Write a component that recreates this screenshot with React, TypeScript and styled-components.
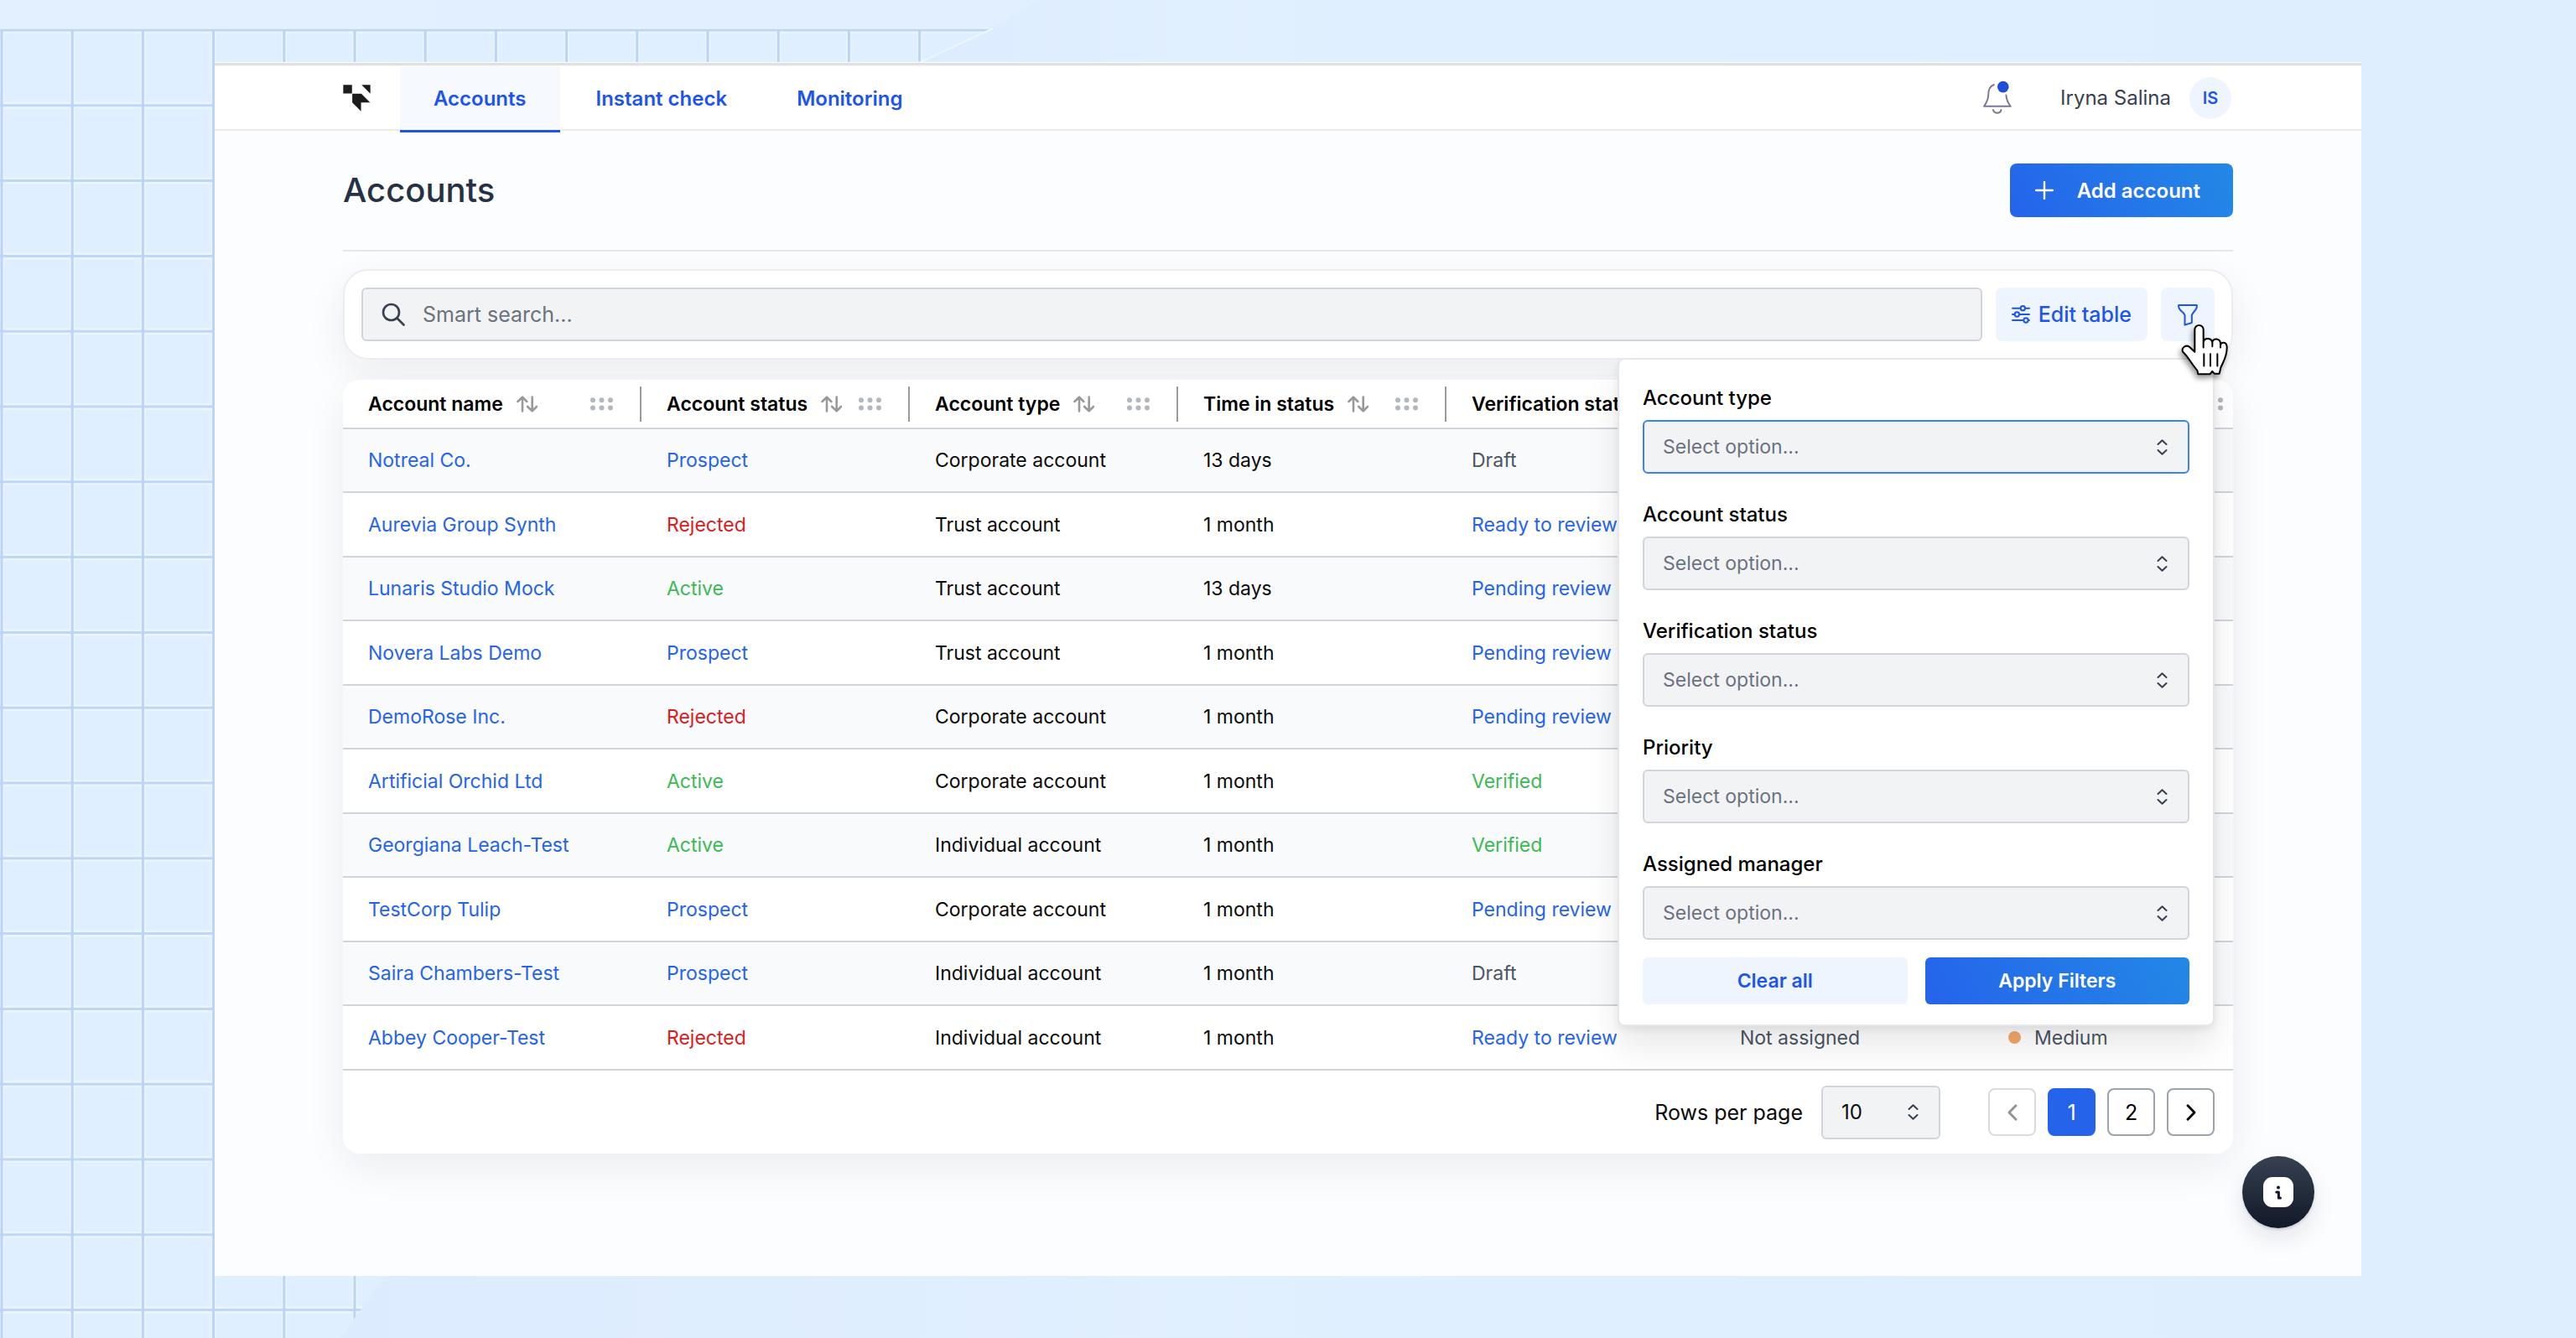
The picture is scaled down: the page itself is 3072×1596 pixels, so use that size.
import React from "react";
import styled, { createGlobalStyle } from "styled-components";

const GlobalStyle = createGlobalStyle`
  *, *::before, *::after { box-sizing: border-box; }
  body { margin: 0; background: #dfeeff; }
  body, button, input, select { font-family: Inter, "Liberation Sans", sans-serif; }
`;

const primaryFill = "linear-gradient(60deg, #2563eb 0%, #2388e6 100%)";

const Stage = styled.div`
  position: relative;
  min-height: 100vh;
  padding: 74px 256px;
  background: linear-gradient(90deg, #e2f0ff 0%, #dfeeff 100%);
  overflow: hidden;
`;

const Backdrop = styled.svg`
  position: absolute;
  top: 0;
  left: 0;
`;

const Panel = styled.div`
  position: relative;
  min-height: calc(100vh - 148px);
  background: #fcfdff;
`;

const PanelEdge = styled.div`
  height: 5px;
  background: linear-gradient(#ffffff 0 1px, #e0e0e0 1px 4px, #f6f6f7 4px 5px);
`;

const Header = styled.header`
  display: flex;
  align-items: center;
  height: 77px;
  padding: 0 155px 0 153px;
  background: #ffffff;
  border-bottom: 2px solid #ebebef;
`;

const Logo = styled.svg`
  width: 33px;
  height: 32px;
  margin-right: 35px;
`;

const Nav = styled.nav`
  display: flex;
  align-self: stretch;
  gap: 3px;
  flex: 1;
`;

const Tab = styled.a<{ $active?: boolean }>`
  display: flex;
  align-items: center;
  padding: 0 40px;
  margin-bottom: -4px;
  border-bottom: 3px solid ${(p) => (p.$active ? "#1d55eb" : "transparent")};
  background: ${(p) => (p.$active ? "#f6faff" : "transparent")};
  color: #1d55eb;
  font-size: 24px;
  font-weight: 600;
  text-decoration: none;
`;

const BellButton = styled.button`
  display: flex;
  padding: 0;
  border: 0;
  background: none;
  margin-right: 58px;
`;

const User = styled.div`
  display: flex;
  align-items: center;
  gap: 22px;
  color: #374151;
  font-size: 24px;
  font-weight: 400;
`;

const Avatar = styled.span`
  display: grid;
  place-items: center;
  width: 50px;
  height: 50px;
  border-radius: 50%;
  background: #eef5ff;
  color: #1d55eb;
  font-size: 20px;
  font-weight: 600;
`;

const Content = styled.main`
  padding: 0 153px;
`;

const TitleBar = styled.div`
  display: flex;
  align-items: center;
  justify-content: space-between;
  height: 144px;
  border-bottom: 2px solid #e5e7eb;
  margin-bottom: 21px;
`;

const Title = styled.h1`
  margin: 0;
  color: #263244;
  font-size: 40px;
  line-height: 48px;
  font-weight: 500;
`;

const AddButton = styled.button`
  display: flex;
  align-items: center;
  gap: 28px;
  height: 64px;
  padding: 0 39px 0 30px;
  border: 0;
  border-radius: 8px;
  background: ${primaryFill};
  color: #ffffff;
  font-size: 24px;
  font-weight: 600;
`;

const SearchCard = styled.div`
  position: relative;
  z-index: 2;
  display: flex;
  gap: 16px;
  padding: 20px;
  margin-bottom: 24px;
  border: 2px solid #ededf1;
  border-radius: 30px;
  background: #ffffff;
`;

const SearchField = styled.label`
  display: flex;
  align-items: center;
  gap: 21px;
  flex: 1;
  height: 64px;
  padding: 0 22px;
  border: 2px solid #d1d5db;
  border-radius: 6px;
  background: #f2f3f5;
`;

const SearchInput = styled.input`
  flex: 1;
  border: 0;
  outline: 0;
  padding: 0;
  background: none;
  color: #6b7280;
  font-size: 25px;
  &::placeholder {
    color: #6b7280;
    opacity: 1;
  }
`;

const SoftButton = styled.button`
  display: flex;
  align-items: center;
  justify-content: center;
  gap: 10px;
  height: 64px;
  padding: 0 19px;
  border: 0;
  border-radius: 8px;
  background: #eef5ff;
  color: #1d55eb;
  font-size: 25px;
  font-weight: 500;
`;

const FilterAnchor = styled.div`
  position: relative;
`;

const Pointer = styled.svg`
  position: absolute;
  top: 41px;
  left: 22px;
  z-index: 2;
  filter: drop-shadow(-2px 4px 3px rgba(0, 0, 0, 0.4));
`;

const FilterPanel = styled.form`
  position: absolute;
  top: 85px;
  right: 0;
  z-index: 1;
  width: 712px;
  padding: 27px 28px 24px;
  border: 2px solid #e5e7eb;
  border-top-width: 1px;
  border-radius: 8px;
  background: #ffffff;
  box-shadow: 0 24px 40px rgba(0, 0, 0, 0.09), 0 4px 10px rgba(0, 0, 0, 0.07);
`;

const FieldList = styled.div`
  display: grid;
  gap: 30px;
  margin-bottom: 21px;
`;

const FieldLabel = styled.label`
  display: block;
  margin-bottom: 7px;
  color: #000000;
  font-size: 24px;
  line-height: 38px;
  font-weight: 500;
`;

const SelectBox = styled.div`
  display: grid;
  align-items: center;
  & > * {
    grid-area: 1 / 1;
  }
  & > svg {
    justify-self: end;
    margin-right: 26px;
    pointer-events: none;
  }
`;

const Select = styled.select<{ $focused?: boolean; $dark?: boolean }>`
  appearance: none;
  width: 100%;
  height: 64px;
  padding: 0 22px;
  border: 2px solid ${(p) => (p.$focused ? "#3b82f6" : "#d1d5db")};
  border-radius: 6px;
  outline: 0;
  background: #f2f3f5;
  color: ${(p) => (p.$dark ? "#0b0b0c" : "#6b7280")};
  font-size: ${(p) => (p.$dark ? 24 : 23)}px;
`;

const FilterActions = styled.div`
  display: grid;
  grid-template-columns: 1fr 1fr;
  gap: 21px;
`;

const ActionButton = styled.button<{ $primary?: boolean }>`
  height: 56px;
  border: 0;
  border-radius: 6px;
  background: ${(p) => (p.$primary ? primaryFill : "#eef5ff")};
  color: ${(p) => (p.$primary ? "#ffffff" : "#1d55eb")};
  font-size: 23px;
  font-weight: 600;
`;

const TableCard = styled.section`
  border-radius: 20px;
  background: #ffffff;
`;

const Shadowed = styled.div`
  border-radius: 30px;
  box-shadow: 0 16px 48px rgba(16, 24, 40, 0.07);
`;

const TableClip = styled.div`
  overflow: hidden;
  border-radius: 20px 20px 0 0;
`;

const Table = styled.table`
  table-layout: fixed;
  width: 2276px;
  border-collapse: collapse;
`;

const HeadCell = styled.th<{ $wide?: boolean }>`
  width: ${(p) => (p.$wide ? 356 : 320)}px;
  height: 58px;
  padding: 0;
  border-bottom: 2px solid #d1d5db;
  text-align: left;
`;

const HeadInner = styled.div`
  display: flex;
  align-items: center;
  height: 42px;
  padding: 0 32px 0 30px;
  border-right: 2px solid #9b9b9b;
  color: #000000;
  font-size: 23px;
  font-weight: 600;
  white-space: nowrap;
  & > svg:first-of-type {
    margin: 0 auto 0 16px;
    flex: none;
  }
  & > svg {
    flex: none;
  }
`;

const Row = styled.tr`
  height: 76px;
  background: #ffffff;
  &:nth-child(odd) {
    background: #f9fafc;
  }
  &:nth-child(even) {
    height: 77px;
  }
`;

const tones = {
  link: "#2563eb",
  danger: "#dc1c1c",
  success: "#3cb954",
  text: "#0b0b0c",
  muted: "#4b5563",
};

const Cell = styled.td<{ $tone: keyof typeof tones }>`
  padding: 0 30px;
  border-bottom: 2px solid #d1d5db;
  color: ${(p) => tones[p.$tone]};
  font-size: 23px;
  white-space: nowrap;
`;

const AccountLink = styled.a`
  color: inherit;
  text-decoration: none;
`;

const PriorityTag = styled.span`
  display: flex;
  align-items: center;
  gap: 16px;
  &::before {
    content: "";
    width: 15px;
    height: 15px;
    border-radius: 50%;
    background: #f3a769;
  }
`;

const Footer = styled.footer`
  display: flex;
  align-items: center;
  justify-content: flex-end;
  height: 99px;
  padding: 0 22px;
`;

const RowsLabel = styled.label`
  margin-right: 22px;
  color: #0b0b0c;
  font-size: 25px;
`;

const PageSize = styled(SelectBox)`
  width: 142px;
  margin-right: 57px;
`;

const Pages = styled.div`
  display: flex;
  gap: 14px;
`;

const PageButton = styled.button<{ $current?: boolean }>`
  display: grid;
  place-items: center;
  width: 57px;
  height: 57px;
  padding: 0;
  border: 2px solid ${(p) => (p.$current ? "#2563eb" : "#9ca3af")};
  border-radius: 8px;
  background: ${(p) => (p.$current ? "#2563eb" : "#ffffff")};
  color: ${(p) => (p.$current ? "#ffffff" : "#000000")};
  font-size: 25px;
  &:disabled {
    border-color: #d9dbe0;
    color: #929292;
  }
`;

const HelpButton = styled.button`
  position: absolute;
  right: 56px;
  bottom: 57px;
  display: grid;
  place-items: center;
  width: 86px;
  height: 86px;
  padding: 0;
  border: 0;
  border-radius: 50%;
  background: linear-gradient(#374151, #111827);
  box-shadow: 0 12px 28px rgba(17, 24, 39, 0.1), 0 2px 3px rgba(17, 24, 39, 0.15);
`;

const UpDown = () => (
  <svg width="13" height="19" viewBox="0 0 13 19" fill="none" stroke="#374151" strokeWidth="2" strokeLinecap="round" strokeLinejoin="round" aria-hidden="true">
    <path d="M1.5 6 6.5 1.2 11.5 6M1.5 13 6.5 17.8 11.5 13" />
  </svg>
);

const SortIcon = () => (
  <svg width="25" height="20" viewBox="0 0 25 20" fill="none" stroke="#999999" strokeWidth="2.6" strokeLinecap="round" strokeLinejoin="round" aria-hidden="true">
    <path d="M7 18.4V1.8M1.5 7 7 1.6 12.3 7M18.7 1.6v16.6M13.2 13l5.5 5.4 5.3-5.4" />
  </svg>
);

const DragIcon = () => (
  <svg width="27" height="16" viewBox="0 0 27 16" fill="#b3b7be" aria-hidden="true">
    {[3, 13.5, 24].map((x) =>
      [3.2, 12.4].map((y) => <circle key={`${x}-${y}`} cx={x} cy={y} r="3" />)
    )}
  </svg>
);

const columns = [
  { name: "Account name", titled: true },
  { name: "Account status", titled: true },
  { name: "Account type", titled: true },
  { name: "Time in status", titled: true },
  { name: "Verification status", titled: true },
  { name: "Assigned manager", titled: false },
  { name: "Priority", titled: false },
];

type Account = {
  name: string;
  status: string;
  type: string;
  time: string;
  check: string;
  manager?: string;
  priority?: string;
};

const accounts: Account[] = [
  { name: "Notreal Co.", status: "Prospect", type: "Corporate account", time: "13 days", check: "Draft" },
  { name: "Aurevia Group Synth", status: "Rejected", type: "Trust account", time: "1 month", check: "Ready to review" },
  { name: "Lunaris Studio Mock", status: "Active", type: "Trust account", time: "13 days", check: "Pending review" },
  { name: "Novera Labs Demo", status: "Prospect", type: "Trust account", time: "1 month", check: "Pending review" },
  { name: "DemoRose Inc.", status: "Rejected", type: "Corporate account", time: "1 month", check: "Pending review" },
  { name: "Artificial Orchid Ltd", status: "Active", type: "Corporate account", time: "1 month", check: "Verified" },
  { name: "Georgiana Leach-Test", status: "Active", type: "Individual account", time: "1 month", check: "Verified" },
  { name: "TestCorp Tulip", status: "Prospect", type: "Corporate account", time: "1 month", check: "Pending review" },
  { name: "Saira Chambers-Test", status: "Prospect", type: "Individual account", time: "1 month", check: "Draft" },
  { name: "Abbey Cooper-Test", status: "Rejected", type: "Individual account", time: "1 month", check: "Ready to review", manager: "Not assigned", priority: "Medium" },
];

const toneOf: Record<string, keyof typeof tones> = {
  Prospect: "link",
  Rejected: "danger",
  Active: "success",
  Verified: "success",
  Draft: "muted",
  "Ready to review": "link",
  "Pending review": "link",
};

const filters = ["Account type", "Account status", "Verification status", "Priority", "Assigned manager"];

const gridColumns = Array.from({ length: 14 }, (_, i) => 2 + i * 84.2);
const gridRows = Array.from({ length: 18 }, (_, i) => 36 + i * 89.8);

const GridBackdrop = () => (
  <Backdrop width="1400" height="1596" viewBox="0 0 1400 1596" aria-hidden="true">
    <defs>
      <clipPath id="grid-area">
        <path d="M0 33H1184L1096 74 459 1522 406 1596H0Z" />
      </clipPath>
      <linearGradient id="fold" x1="0" y1="0" x2="1" y2="0">
        <stop offset="0" stopColor="#dbeafe" stopOpacity="0.8" />
        <stop offset="1" stopColor="#dbeafe" stopOpacity="0" />
      </linearGradient>
    </defs>
    <path d="M1240 0H1400V76H1092L1180 36Z" fill="url(#fold)" />
    <path d="M459 1522H1400V1596H406Z" fill="url(#fold)" />
    <g clipPath="url(#grid-area)">
      <rect width="1400" height="1596" fill="#e0efff" />
      {gridRows.map((y) => (
        <path key={y} d={`M0 ${y}H1400`} stroke="#ebf5ff" strokeWidth="8" />
      ))}
      {gridColumns.map((x) => (
        <path key={x} d={`M${x} 36V1596`} stroke="#ebf5ff" strokeWidth="6" />
      ))}
      {gridRows.map((y) => (
        <path key={y} d={`M0 ${y}H1400`} stroke="#bfd7f7" strokeWidth="3" />
      ))}
      {gridColumns.map((x) => (
        <path key={x} d={`M${x} 36V1596`} stroke="#bbd4f6" strokeWidth="3" />
      ))}
    </g>
    <path d="M1184 34 1094 76" stroke="#edf6ff" strokeWidth="2" />
  </Backdrop>
);

export default function App() {
  return (
    <>
      <GlobalStyle />
      <Stage>
        <GridBackdrop />
        <Panel>
          <PanelEdge />
          <Header>
            <Logo viewBox="27 87 98 95" fill="#1c1c1c" aria-hidden="true">
              <path d="M28 88H59V118H28ZM93 88H124V119ZM60 119H92L123 150H91V181L60 150Z" />
            </Logo>
            <Nav>
              <Tab href="#accounts" $active>Accounts</Tab>
              <Tab href="#instant-check">Instant check</Tab>
              <Tab href="#monitoring">Monitoring</Tab>
            </Nav>
            <BellButton type="button" aria-label="Notifications">
              <svg width="35" height="41" viewBox="46 50 104 124" fill="none" stroke="#7a7a95" strokeWidth="6" strokeLinecap="round" strokeLinejoin="round">
                <path d="M87 65C72 70 67 85 67 100C67 120 60 131 51 143H147C137 130 132 119 131 103" />
                <path d="M84 156C88 171 110 171 113 156" />
                <circle cx="120" cy="73" r="20.5" fill="#1d4ed8" stroke="none" />
              </svg>
            </BellButton>
            <User>
              Iryna Salina
              <Avatar>IS</Avatar>
            </User>
          </Header>

          <Content>
            <TitleBar>
              <Title>Accounts</Title>
              <AddButton type="button">
                <svg width="22" height="22" viewBox="0 0 22 22" stroke="#ffffff" strokeWidth="2.4" strokeLinecap="round" aria-hidden="true">
                  <path d="M11 1V21M1 11H21" />
                </svg>
                Add account
              </AddButton>
            </TitleBar>

            <Shadowed>
              <SearchCard>
                <SearchField>
                  <svg width="28" height="28" viewBox="0 0 28 28" fill="none" stroke="#374151" strokeWidth="2.6" strokeLinecap="round" aria-hidden="true">
                    <circle cx="11.5" cy="11.5" r="9.5" />
                    <path d="M18.5 18.5 26.5 26.5" />
                  </svg>
                  <SearchInput type="search" placeholder="Smart search..." aria-label="Smart search" />
                </SearchField>
                <SoftButton type="button">
                  <svg width="22" height="22" viewBox="96 103 66 66" fill="none" stroke="#1d55eb" strokeWidth="6" strokeLinecap="round" aria-hidden="true">
                    <path d="M99 114H125M147 114H159M99 136H104M126 136H159M99 157H135M157 157H159" />
                    <circle cx="136" cy="114" r="8" />
                    <circle cx="115" cy="136" r="8" />
                    <circle cx="147" cy="157" r="8" />
                  </svg>
                  Edit table
                </SoftButton>
                <FilterAnchor>
                  <SoftButton type="button" aria-label="Filters">
                    <svg width="26" height="27" viewBox="678 97 77 81" fill="none" stroke="#1d55eb" strokeWidth="6" strokeLinejoin="round" aria-hidden="true">
                      <path d="M684 103H749V108C749 122 730 130 731 141V166L706 174V141C706 130 684 122 684 108Z" />
                    </svg>
                  </SoftButton>
                  <FilterPanel>
                    <FieldList>
                      {filters.map((label, i) => (
                        <div key={label}>
                          <FieldLabel htmlFor={`filter-${i}`}>{label}</FieldLabel>
                          <SelectBox>
                            <Select id={`filter-${i}`} $focused={i === 0}>
                              <option>Select option...</option>
                            </Select>
                            <UpDown />
                          </SelectBox>
                        </div>
                      ))}
                    </FieldList>
                    <FilterActions>
                      <ActionButton type="reset">Clear all</ActionButton>
                      <ActionButton type="button" $primary>Apply Filters</ActionButton>
                    </FilterActions>
                  </FilterPanel>
                  <Pointer width="60" height="67" viewBox="690 165 180 200" fill="#ffffff" stroke="#000000" strokeWidth="6" strokeLinejoin="round" strokeLinecap="round" aria-hidden="true">
                    <path d="M745 272V192A15.500 15.500 0 0 1 776 192V256V238C778 220 804 220 808 238V252V238C810 222 834 222 837 240V256V248C840 234 858 236 860 252C862 285 848 305 838 328L833 350H816L808 341L800 351H757L754 338C736 318 722 290 702 271C696 256 714 246 725 253Z" />
                    <path d="M778 279V322M801 279V322M826 279V322" />
                  </Pointer>
                </FilterAnchor>
              </SearchCard>
            </Shadowed>

            <Shadowed>
              <TableCard>
                <TableClip>
                  <Table>
                    <thead>
                      <tr>
                        {columns.map((column, i) => (
                          <HeadCell key={column.name} $wide={i === 0} aria-label={column.name}>
                            <HeadInner>
                              {column.titled && column.name}
                              <SortIcon />
                              <DragIcon />
                            </HeadInner>
                          </HeadCell>
                        ))}
                      </tr>
                    </thead>
                    <tbody>
                      {accounts.map((a) => (
                        <Row key={a.name}>
                          <Cell $tone="link">
                            <AccountLink href="#account">{a.name}</AccountLink>
                          </Cell>
                          <Cell $tone={toneOf[a.status]}>{a.status}</Cell>
                          <Cell $tone="text">{a.type}</Cell>
                          <Cell $tone="text">{a.time}</Cell>
                          <Cell $tone={toneOf[a.check]}>{a.check}</Cell>
                          <Cell $tone="muted">{a.manager}</Cell>
                          <Cell $tone="muted">{a.priority && <PriorityTag>{a.priority}</PriorityTag>}</Cell>
                        </Row>
                      ))}
                    </tbody>
                  </Table>
                </TableClip>
                <Footer>
                  <RowsLabel htmlFor="page-size">Rows per page</RowsLabel>
                  <PageSize>
                    <Select id="page-size" $dark>
                      <option>10</option>
                    </Select>
                    <UpDown />
                  </PageSize>
                  <Pages>
                    <PageButton type="button" disabled aria-label="Previous page">
                      <svg width="12" height="20" viewBox="0 0 12 20" fill="none" stroke="currentColor" strokeWidth="2.8" strokeLinecap="round" strokeLinejoin="round">
                        <path d="M10 1.800 2 10 10 18.200" />
                      </svg>
                    </PageButton>
                    <PageButton type="button" $current>1</PageButton>
                    <PageButton type="button">2</PageButton>
                    <PageButton type="button" aria-label="Next page">
                      <svg width="12" height="20" viewBox="0 0 12 20" fill="none" stroke="currentColor" strokeWidth="2.8" strokeLinecap="round" strokeLinejoin="round">
                        <path d="M2 1.800 10 10 2 18.200" />
                      </svg>
                    </PageButton>
                  </Pages>
                </Footer>
              </TableCard>
            </Shadowed>
          </Content>

          <HelpButton type="button" aria-label="Help">
            <svg width="36" height="36" viewBox="0 0 36 36" aria-hidden="true">
              <rect width="36" height="36" rx="11" fill="#ffffff" />
              <circle cx="18" cy="12.500" r="2" fill="#111827" />
              <path d="M15.800 18H18.400V25H20.500" fill="none" stroke="#111827" strokeWidth="3" strokeLinecap="round" strokeLinejoin="round" />
            </svg>
          </HelpButton>
        </Panel>
      </Stage>
    </>
  );
}
